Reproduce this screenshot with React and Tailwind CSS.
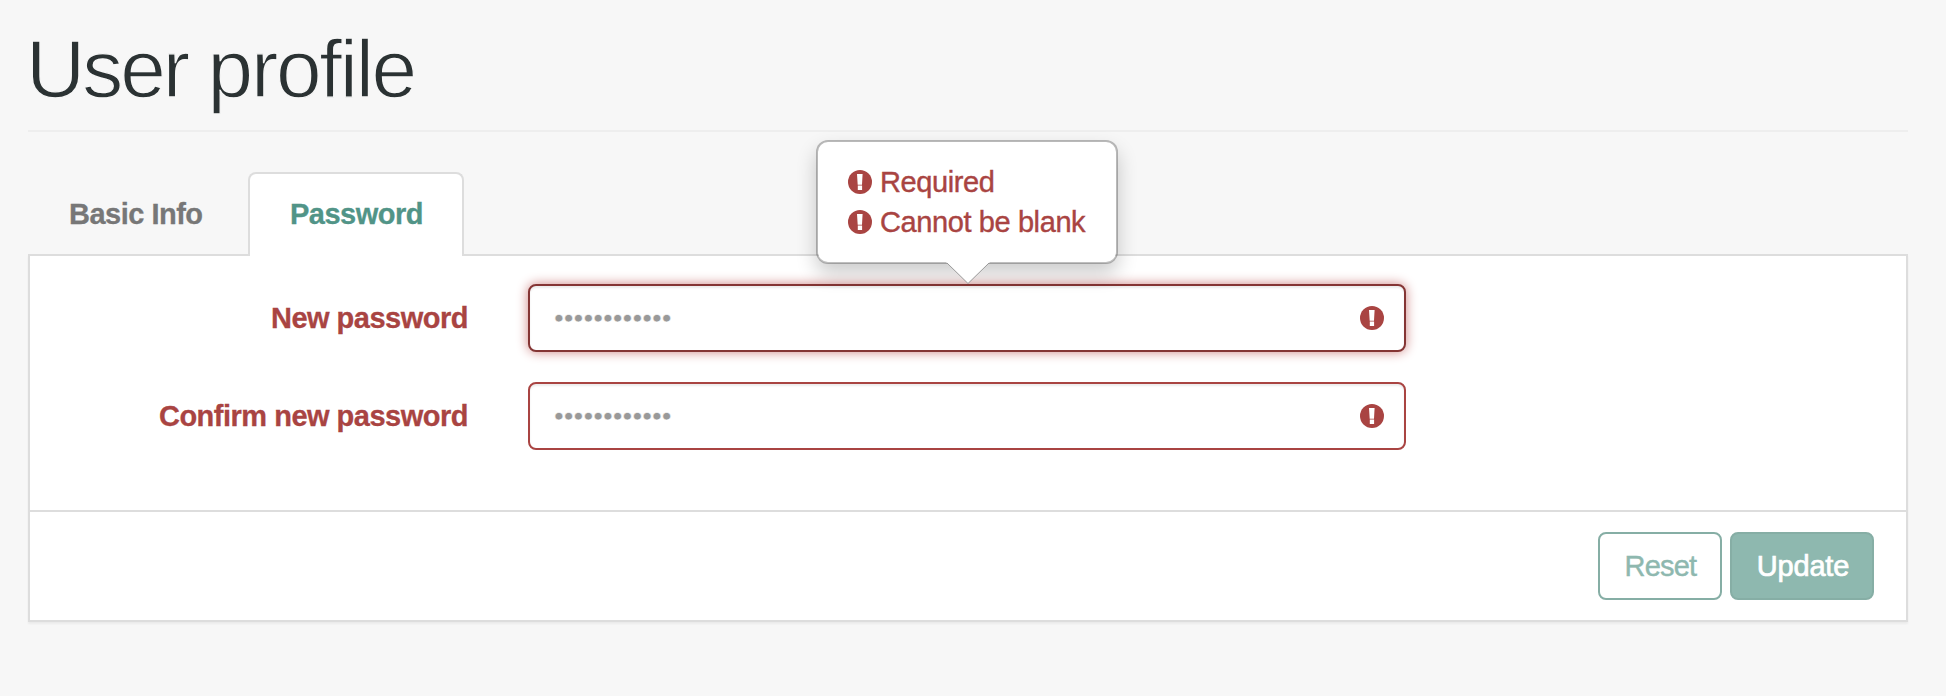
function AlertIcon({ className = "" }) {
  return (
    <svg viewBox="0 0 24 24" className={`size-6 shrink-0 ${className}`} aria-hidden="true">
      <circle cx="12" cy="12" r="12" fill="#a94442" />
      <path d="M9 4h5.6L14 14.7H9.7zM9.8 15.5h4.3V20H9.8z" fill="#fff" />
    </svg>
  );
}

function Tooltip({ messages }) {
  return (
    <div className="absolute bottom-[88px] left-[288px] flex h-[124px] w-[302px] flex-col rounded-xl border-2 border-black/25 bg-white bg-clip-padding pt-5 pl-[30px] shadow-[0_10px_20px_rgba(0,0,0,0.2)]">
      {messages.map((message) => (
        <div
          key={message}
          className="flex h-10 items-center gap-2 text-[29px] leading-10 tracking-[-0.4px] whitespace-nowrap text-[#a94442] [-webkit-text-stroke:0.4px_#a94442]"
        >
          <AlertIcon />
          <span>{message}</span>
        </div>
      ))}
      <svg viewBox="0 0 44 24" className="absolute top-[119px] left-[128px] h-6 w-11" aria-hidden="true">
        <path d="M0 0h44v1L22 22.5 0 1z" fill="#fff" />
        <path d="M1 2l21 20.5L43 2" fill="none" stroke="#999" strokeWidth="1" />
      </svg>
    </div>
  );
}

function PasswordRow({ label, focused }) {
  return (
    <div className="flex h-[68px] items-center">
      <label className="w-[438px] text-right text-[29px] leading-10 font-bold tracking-[-0.5px] text-[#a94442] [-webkit-text-stroke:0.3px_#a94442]">
        {label}
      </label>
      <div
        className={`ml-[60px] flex h-[68px] w-[878px] items-center justify-between rounded-lg border-2 bg-white pr-5 pl-6 ${
          focused
            ? "border-[#843534] shadow-[inset_0_2px_2px_rgba(0,0,0,0.075),0_0_12px_#ce8483]"
            : "border-[#a94442] shadow-[inset_0_2px_2px_rgba(0,0,0,0.075)]"
        }`}
      >
        <span className="text-[28px] leading-10 text-[#999] [-webkit-text-stroke:0.4px_#fff]">••••••••••••</span>
        <AlertIcon />
      </div>
    </div>
  );
}

export default function App() {
  return (
    <main className="min-h-[696px] bg-[#f7f7f7] pr-[38px] pl-7 font-['Liberation_Sans',Arial,sans-serif]">
      <header className="h-[132px] border-b-2 border-[#eee] pt-[22px]">
        <h1 className="-ml-0.5 text-[82px] leading-[94px] tracking-[-2.3px] text-[#2b3233] [-webkit-text-stroke:1.3px_#f7f7f7]">
          <span className="tracking-[-3px]">User</span> profile
        </h1>
      </header>

      <nav className="relative z-10 mt-10 -mb-0.5 flex h-[84px] text-[29px] leading-10 font-bold tracking-[-0.5px]">
        <a className="flex w-[220px] justify-start pt-[22px] pl-[41px] text-[#777] [-webkit-text-stroke:0.3px_#777]">Basic Info</a>
        <a className="flex w-[216px] justify-center rounded-t-lg border-2 border-b-0 border-[#ddd] bg-white pt-5 pl-px text-[#519487] [-webkit-text-stroke:0.3px_#519487]">
          Password
        </a>
      </nav>

      <section className="h-[368px] border-2 border-[#ddd] bg-white shadow-[0_2px_2px_rgba(0,0,0,0.05)]">
        <div className="flex h-[254px] flex-col gap-[30px] pt-7">
          <div className="relative">
            <PasswordRow label="New password" focused />
            <div className="absolute bottom-0 left-[498px] z-20">
              <Tooltip messages={["Required", "Cannot be blank"]} />
            </div>
          </div>
          <PasswordRow label="Confirm new password" />
        </div>
        <footer className="flex h-[110px] items-start justify-end gap-2 border-t-2 border-[#ddd] pt-5 pr-8 text-[29px]">
          <button className="h-[68px] w-[124px] rounded-lg border-2 border-[#86aea5] bg-white pt-0.5 pl-px tracking-[-0.8px] text-[#8eb8af] [-webkit-text-stroke:0.4px_#8eb8af]">
            Reset
          </button>
          <button className="h-[68px] w-36 rounded-lg border-2 border-[#86aea5] bg-[#8eb8af] pt-0.5 pl-0.5 tracking-[-0.2px] text-white [-webkit-text-stroke:0.7px_#fff]">
            Update
          </button>
        </footer>
      </section>
    </main>
  );
}
